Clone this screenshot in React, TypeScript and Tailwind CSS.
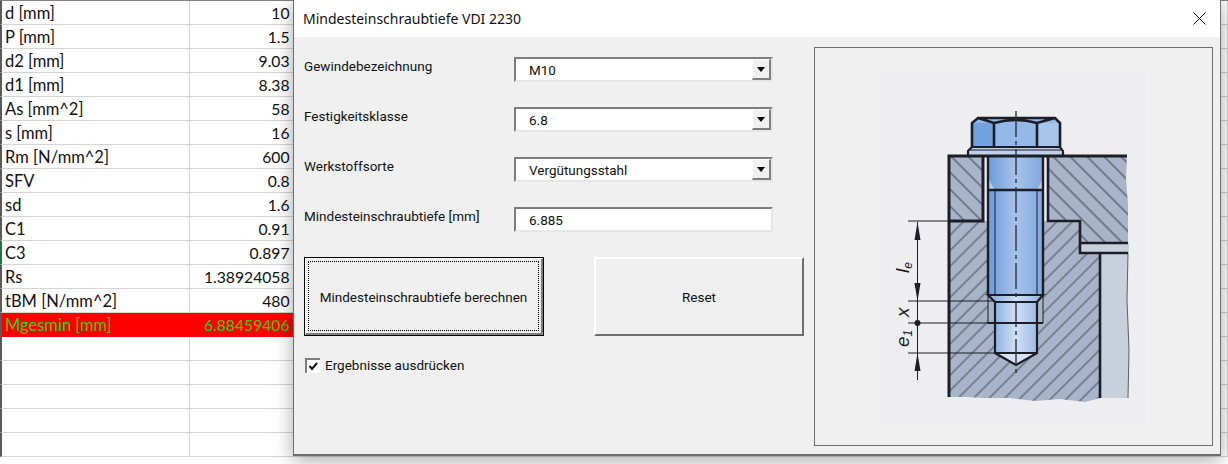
const ROWS: { label: string; value: string }[] = [
  { label: "d [mm]", value: "10" },
  { label: "P [mm]", value: "1.5" },
  { label: "d2 [mm]", value: "9.03" },
  { label: "d1 [mm]", value: "8.38" },
  { label: "As [mm^2]", value: "58" },
  { label: "s [mm]", value: "16" },
  { label: "Rm [N/mm^2]", value: "600" },
  { label: "SFV", value: "0.8" },
  { label: "sd", value: "1.6" },
  { label: "C1", value: "0.91" },
  { label: "C3", value: "0.897" },
  { label: "Rs", value: "1.38924058" },
  { label: "tBM [N/mm^2]", value: "480" },
  { label: "Mgesmin [mm]", value: "6.88459406" },
  { label: "", value: "" },
  { label: "", value: "" },
  { label: "", value: "" },
  { label: "", value: "" },
  { label: "", value: "" },
];

const EXTRA_COLUMNS = [0, 1, 2, 3, 4, 5, 6, 7, 8];

function SheetRow({ label, value, index }: { label: string; value: string; index: number }) {
  const isResult = label.startsWith("Mgesmin");
  const isActive = label === "C3";
  return (
    <div className="flex h-[24px] shrink-0">
      <div
        className={`flex w-[190px] items-center border-b border-l-2 border-r pl-[3px] pt-[2px] text-[16.5px] ${
          isResult
            ? "border-b-[#ff0000] border-r-[#ff0000] bg-[#ff0000] text-[#33d100]"
            : "border-b-[#d4d4d4] border-r-[#d4d4d4]"
        } ${isActive ? "border-l-[#217346]" : "border-l-[#5a5a5a]"}`}
      >
        {label}
      </div>
      <div
        className={`flex w-[104px] items-center justify-end border-b border-r pr-[3px] pt-[2px] text-[15.7px] ${
          isResult
            ? "border-b-[#ff0000] border-r-[#ff0000] bg-[#ff0000] text-[#33d100]"
            : "border-b-[#d4d4d4] border-r-[#d4d4d4]"
        }`}
      >
        {value}
      </div>
      {EXTRA_COLUMNS.map((col) => (
        <div key={`${index}-${col}`} className="w-[104px] border-b border-r border-[#d4d4d4]" />
      ))}
    </div>
  );
}

function ComboField({ label, value }: { label: string; value: string }) {
  return (
    <div className="mb-[25px] flex h-[25px]">
      <div className="w-[210px] leading-[18px]">{label}</div>
      <div className="flex h-[25px] w-[259px] border-b-2 border-l-2 border-r-2 border-t-2 border-b-[#e6e6e6] border-l-[#7d7d7d] border-r-[#e6e6e6] border-t-[#7d7d7d] bg-white">
        <div className="flex-1 pl-[13px] leading-[23px]">{value}</div>
        <div className="flex h-[21px] w-[19px] items-center justify-center border-b-2 border-l border-r-2 border-t border-b-[#7d7d7d] border-l-white border-r-[#7d7d7d] border-t-white bg-[#f0f0f0]">
          <div className="h-0 w-0 border-l-[4px] border-r-[4px] border-t-[5px] border-l-transparent border-r-transparent border-t-black" />
        </div>
      </div>
    </div>
  );
}

function BoltDrawing() {
  const dark = "#1c1d26";
  return (
    <svg viewBox="815 48 397 397" className="block h-full w-full">
      <defs>
        <linearGradient id="shank" x1="0" x2="1" y1="0" y2="0">
          <stop offset="0" stopColor="#6b9bdb" />
          <stop offset="0.5" stopColor="#a7c3ea" />
          <stop offset="1" stopColor="#7ea8df" />
        </linearGradient>
        <linearGradient id="core" x1="0" x2="1" y1="0" y2="0">
          <stop offset="0" stopColor="#8fb2e4" />
          <stop offset="0.5" stopColor="#d2e0f4" />
          <stop offset="1" stopColor="#9dbce8" />
        </linearGradient>
        <pattern id="hatchUp" width="12" height="12" patternUnits="userSpaceOnUse" patternTransform="rotate(45)">
          <rect width="12" height="12" fill="#a8b4c9" />
          <line x1="0" y1="2" x2="12" y2="2" stroke="#3a3f4c" strokeWidth="1" />
        </pattern>
        <pattern id="hatchDown" width="11" height="11" patternUnits="userSpaceOnUse" patternTransform="rotate(-45)">
          <rect width="11" height="11" fill="#a8b4c9" />
          <line x1="0" y1="2" x2="11" y2="2" stroke="#3a3f4c" strokeWidth="0.9" />
        </pattern>
      </defs>

      <rect x="880" y="70" width="266" height="355" fill="#eeeef1" />

      {/* grey part behind the lower plate */}
      <path d="M1100,253 H1128 L1127,300 1129,350 1128,398 H1100 Z" fill="#c8d0dc" />
      <path d="M1128,253 L1127,300 1129,350 1128,398" fill="none" stroke="#5a5f6c" strokeWidth="1" />
      <rect x="1080" y="243" width="49" height="10" fill="#c8d0dc" />

      {/* clamped part */}
      <path d="M950,157 H983 V221 H950 Z" fill="url(#hatchUp)" />
      <path d="M1048,157 H1127 L1126,178 1128,205 1128,243 H1080 V221 H1048 Z" fill="url(#hatchUp)" />

      {/* threaded part */}
      <path
        d="M949,221 H1080 V253 H1100 V398 L1085,402 1060,399 1035,401 1010,398 985,398 965,397 949,397 Z"
        fill="url(#hatchDown)"
      />
      <rect x="983" y="157" width="65" height="64" fill="#eeeef1" />

      {/* bolt */}
      <rect x="988" y="156" width="55" height="139" fill="url(#shank)" />
      <path d="M988,178 L995,190 H1037 L1043,178 V190 H988 Z" fill="#b9cdea" />
      <path d="M988,295 H1043 V323 H988 Z" fill="#a8b4c9" />
      <path d="M995,295 H1037 V353 L1016,365 L995,353 Z" fill="url(#core)" />
      <path d="M995,353 H1037 L1016,365 Z" fill="#d5e2f5" />

      {/* head */}
      <path d="M972,123 L978,118 H1055 L1060,123 V147 H972 Z" fill="#94b8e8" />
      <path d="M972,123 L994,123 V147 H972 Z" fill="#74a2de" />
      <path d="M1037,123 H1060 V147 H1037 Z" fill="#aac5ea" />
      <path d="M968,155 V151 L972,147 H1060 L1063,151 V155 Z" fill="#c0d0e8" />
      <path
        d="M972,147 V123 L978,118 H1055 L1060,123 V147 M978,118 L994,123 Q1016,117 1037,123 L1055,118 M994,123 V147 M1037,123 V147"
        fill="none"
        stroke={dark}
        strokeWidth="2.6"
      />
      <path d="M968,155 V151 L972,147 H1060 L1063,151 V155" fill="none" stroke={dark} strokeWidth="2.2" />
      <line x1="970" y1="150" x2="1062" y2="150" stroke={dark} strokeWidth="1" />

      {/* heavy outlines */}
      <path d="M949,397 V156 H1127" fill="none" stroke={dark} strokeWidth="3" />
      <path d="M983,157 V221 H949" fill="none" stroke={dark} strokeWidth="3" />
      <path d="M1048,157 V221 H1080 V253 H1128 M1080,243 H1128" fill="none" stroke={dark} strokeWidth="2.6" />
      <line x1="1100" y1="253" x2="1100" y2="398" stroke={dark} strokeWidth="2.6" />
      <path d="M988,157 V295 M1043,157 V295 M988,190 H1043" fill="none" stroke={dark} strokeWidth="2.4" />
      <path d="M995,190 V295 M1037,190 V295" fill="none" stroke={dark} strokeWidth="1" />
      <path
        d="M988,295 H1043 L1037,302 H995 Z M995,302 V353 L1016,365 L1037,353 V302 M995,353 H1037"
        fill="none"
        stroke={dark}
        strokeWidth="2.2"
      />
      <path d="M988,295 V323 H1043 V295" fill="none" stroke={dark} strokeWidth="1" />
      <line x1="988" y1="323" x2="1043" y2="323" stroke={dark} strokeWidth="2.2" />
      <line x1="1016" y1="111" x2="1016" y2="375" stroke="#2b3140" strokeWidth="1.4" strokeDasharray="26 4 4 4" />

      {/* dimensions */}
      <path d="M908,221 H950 M908,301 H995 M908,323 H990 M908,353 H995 M917.5,222 V380" fill="none" stroke={dark} strokeWidth="1" />
      <path d="M917.5,222 L920.5,240 H914.5 Z M917.5,301 L920.5,283 H914.5 Z M917.5,353 L920.5,371 H914.5 Z" fill={dark} />
      <circle cx="917.5" cy="323" r="3" fill={dark} />
      <text transform="translate(909,273) rotate(-90)" fontSize="19" fontStyle="italic" fill={dark} className="font-['Liberation_Sans',sans-serif]">
        l<tspan fontSize="12" dy="3">e</tspan>
      </text>
      <text transform="translate(909,317) rotate(-90)" fontSize="19" fontStyle="italic" fill={dark} className="font-['Liberation_Sans',sans-serif]">
        x
      </text>
      <text transform="translate(909,347) rotate(-90)" fontSize="19" fontStyle="italic" fill={dark} className="font-['Liberation_Sans',sans-serif]">
        e<tspan fontSize="12" dy="3">1</tspan>
      </text>
    </svg>
  );
}

export default function App() {
  return (
    <div className="relative h-[464px] w-full overflow-hidden bg-white font-['Lato',sans-serif] text-[15px] text-[#111]">
      <div className="flex flex-col border-t border-[#808080]">
        {ROWS.map((row, index) => (
          <SheetRow key={index} index={index} label={row.label} value={row.value} />
        ))}
      </div>

      <div className="absolute left-[293px] top-0 flex h-[456px] w-[928px] flex-col border-b-2 border-l border-r border-[#6e6e6e] bg-[#f0f0f0] font-['Roboto',sans-serif] text-[13.5px] text-[#111] shadow-[0_4px_18px_rgba(0,0,0,0.35)]">
        <div className="flex h-[37px] shrink-0 items-center justify-between bg-white pl-[9px] pr-[14px]">
          <span className="font-['Noto_Sans',sans-serif] text-[14px]">Mindesteinschraubtiefe VDI 2230</span>
          <svg viewBox="0 0 13 13" className="h-[13px] w-[13px]">
            <path d="M0.5,0.5 L12.5,12.5 M12.5,0.5 L0.5,12.5" stroke="#111" strokeWidth="1" fill="none" />
          </svg>
        </div>

        <div className="flex flex-1">
          <div className="w-[520px] pl-[10px] pt-[20px]">
            <ComboField label="Gewindebezeichnung" value="M10" />
            <ComboField label="Festigkeitsklasse" value="6.8" />
            <ComboField label="Werkstoffsorte" value="Vergütungsstahl" />
            <div className="mb-[25px] flex h-[25px]">
              <div className="w-[210px] leading-[18px]">Mindesteinschraubtiefe [mm]</div>
              <div className="h-[25px] w-[259px] border-b-2 border-l-2 border-r-2 border-t-2 border-b-[#e6e6e6] border-l-[#7d7d7d] border-r-[#e6e6e6] border-t-[#7d7d7d] bg-white pl-[13px] leading-[23px]">
                6.885
              </div>
            </div>

            <div className="flex">
              <button
                type="button"
                className="h-[79px] w-[240px] border border-black bg-[#f0f0f0] p-0"
              >
                <span className="block h-full w-full border-b-2 border-l border-r-2 border-t border-b-[#7d7d7d] border-l-white border-r-[#7d7d7d] border-t-white p-[2px]">
                  <span className="flex h-full w-full items-center justify-center border border-dotted border-black pt-[2px]">
                    Mindesteinschraubtiefe berechnen
                  </span>
                </span>
              </button>
              <button
                type="button"
                className="ml-[50px] flex h-[79px] w-[210px] items-center justify-center border-b-2 border-l-2 border-r-2 border-t-2 border-b-[#6e6e6e] border-l-white border-r-[#6e6e6e] border-t-white bg-[#f0f0f0] pt-[2px]"
              >
                Reset
              </button>
            </div>

            <div className="mt-[22px] flex h-[15px] items-center pl-[1px]">
              <div className="h-[15px] w-[15px] border-l-2 border-t-2 border-[#7d7d7d] bg-white">
                <svg viewBox="0 0 13 13" className="block h-[13px] w-[13px]">
                  <path d="M2.5,6 L5,9 L10,3" stroke="#111" strokeWidth="2" fill="none" />
                </svg>
              </div>
              <span className="ml-[5px]">Ergebnisse ausdrücken</span>
            </div>
          </div>

          <div className="mt-[10px] h-[399px] w-[399px] border border-[#6e6e6e]">
            <BoltDrawing />
          </div>
        </div>
      </div>
    </div>
  );
}
